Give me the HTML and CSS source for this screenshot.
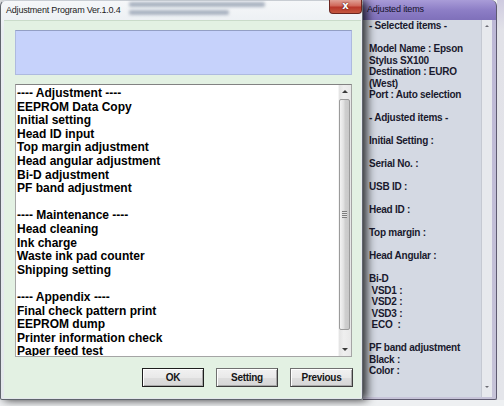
FILE: index.html
```html
<!DOCTYPE html>
<html>
<head>
<meta charset="utf-8">
<link rel="stylesheet" href="styles.css">
</head>
<body>
<div class="desktop">
  <div class="win main">
    <div class="titlebar">
      <span class="title">Adjustment Program Ver.1.0.4</span>
      <span class="ghost"><i class="g1"></i><i class="g2"></i></span>
      <span class="spacer"></span>
      <span class="close">x</span>
    </div>
    <div class="client">
      <div class="status"></div>
      <div class="listbox">
        <ul class="items">
          <li>---- Adjustment ----</li>
          <li>EEPROM Data Copy</li>
          <li>Initial setting</li>
          <li>Head ID input</li>
          <li>Top margin adjustment</li>
          <li>Head angular adjustment</li>
          <li>Bi-D adjustment</li>
          <li>PF band adjustment</li>
          <li></li>
          <li>---- Maintenance ----</li>
          <li>Head cleaning</li>
          <li>Ink charge</li>
          <li>Waste ink pad counter</li>
          <li>Shipping setting</li>
          <li></li>
          <li>---- Appendix ----</li>
          <li>Final check pattern print</li>
          <li>EEPROM dump</li>
          <li>Printer information check</li>
          <li>Paper feed test</li>
        </ul>
        <div class="vscroll">
          <div class="arrow up"></div>
          <div class="track"><div class="thumb"><span class="grip"></span></div></div>
          <div class="arrow down"></div>
        </div>
      </div>
      <div class="buttons">
        <button class="btn default">OK</button>
        <button class="btn">Setting</button>
        <button class="btn wide">Previous</button>
      </div>
    </div>
  </div>
  <div class="win side">
    <div class="side-title">Adjusted items</div>
    <div class="side-body">
      <div class="info">
        <div class="ln">- Selected items -</div>
        <div class="ln"></div>
        <div class="ln">Model Name : Epson</div>
        <div class="ln">Stylus SX100</div>
        <div class="ln">Destination : EURO</div>
        <div class="ln">(West)</div>
        <div class="ln">Port : Auto selection</div>
        <div class="ln"></div>
        <div class="ln">- Adjusted items -</div>
        <div class="ln"></div>
        <div class="ln">Initial Setting :</div>
        <div class="ln"></div>
        <div class="ln">Serial No. :</div>
        <div class="ln"></div>
        <div class="ln">USB ID :</div>
        <div class="ln"></div>
        <div class="ln">Head ID :</div>
        <div class="ln"></div>
        <div class="ln">Top margin :</div>
        <div class="ln"></div>
        <div class="ln">Head Angular :</div>
        <div class="ln"></div>
        <div class="ln">Bi-D</div>
        <div class="ln"> VSD1 :</div>
        <div class="ln"> VSD2 :</div>
        <div class="ln"> VSD3 :</div>
        <div class="ln"> ECO  :</div>
        <div class="ln"></div>
        <div class="ln">PF band adjustment</div>
        <div class="ln">Black :</div>
        <div class="ln">Color :</div>
      </div>
      <div class="side-scroll">
        <div class="sarrow up"></div>
        <div class="sarrow down"></div>
      </div>
    </div>
  </div>
  <div class="rest"></div>
</div>
</body>
</html>
```
FILE: styles.css
```css
html, body {
  margin: 0;
  padding: 0;
}
body {
  width: 504px;
  height: 406px;
  overflow: hidden;
  font-family: "Liberation Sans", Arial, sans-serif;
}
.desktop {
  width: 504px;
  height: 406px;
  display: flex;
  align-items: flex-start;
  background: #eef0f2;
  overflow: hidden;
}

/* ---------- main window ---------- */
.main {
  position: relative;
  z-index: 2;
  width: 363px;
  height: 400px;
  box-sizing: border-box;
  border: 1px solid #60656d;
  border-top-color: #c8cdd3;
  border-radius: 6px 6px 2px 2px;
  padding: 0 1px 1px 3px;
  background: linear-gradient(to bottom, #f5f7f9, #e9edf1 30px, #e4e8ec);
  box-shadow: 4px 0 10px rgba(0, 0, 0, 0.8);
  display: flex;
  flex-direction: column;
}
.titlebar {
  height: 19px;
  display: flex;
  align-items: flex-start;
  flex: none;
}
.title {
  margin-left: 2px;
  font-size: 9px;
  line-height: 19px;
  letter-spacing: -0.2px;
  color: #1b1b1b;
  white-space: nowrap;
}
.ghost {
  margin-left: 9px;
  display: flex;
  flex-direction: column;
  gap: 3px;
  margin-top: 1px;
}
.ghost i {
  display: block;
  height: 5px;
  background: #aab3c1;
  filter: blur(1.8px);
  border-radius: 2px;
}
.ghost .g1 { width: 136px; }
.ghost .g2 { width: 100px; }
.spacer { flex: 1; }
.close {
  width: 33px;
  height: 14px;
  margin-top: -1px;
  margin-right: -1px;
  box-sizing: border-box;
  border: 1px solid #6b2620;
  border-top: none;
  border-radius: 0 0 4px 4px;
  background: linear-gradient(to bottom, #e0a196 0, #d0685a 45%, #b8372b 55%, #c4573f 100%);
  color: #fff;
  font: 700 10px/12px "DejaVu Sans", sans-serif;
  text-align: center;
  text-shadow: 0 0 2px #5a1410, 0 0 1px #5a1410;
}

.client {
  height: 378px;
  box-sizing: border-box;
  background: #e3f1e3;
  border-top: 1px solid #cadbca;
  padding: 9px 9px 11px 11px;
  display: flex;
  flex-direction: column;
}
.status {
  height: 45px;
  box-sizing: border-box;
  background: #c6d2fb;
  border: 1px solid #aebadf;
  border-top-color: #939fc4;
  flex: none;
}
.listbox {
  margin-top: 9px;
  height: 273px;
  box-sizing: border-box;
  border: 1px solid #a5a5a5;
  border-top-color: #828282;
  background: #fff;
  display: flex;
  flex: none;
}
.items {
  flex: 1;
  list-style: none;
  margin: 0;
  padding: 2px 0 0 1px;
  overflow: hidden;
  font-weight: 700;
  font-size: 12px;
  line-height: 13.6px;
  color: #000;
  white-space: nowrap;
}
.items li {
  height: 13.6px;
}
.vscroll {
  width: 12px;
  display: flex;
  flex-direction: column;
  background: linear-gradient(to right, #e3e3e3, #efefef 40%, #e8e8e8);
  border-left: 1px solid #f4f4f4;
}
.arrow {
  height: 13px;
  display: flex;
  align-items: center;
  justify-content: center;
  flex: none;
}
.arrow::before {
  content: "";
  width: 0;
  height: 0;
  border-left: 3px solid transparent;
  border-right: 3px solid transparent;
}
.arrow.up::before { border-bottom: 3px solid #3a3a3a; }
.arrow.down::before { border-top: 3px solid #3a3a3a; }
.track {
  flex: 1;
  padding-top: 1px;
}
.thumb {
  height: 231px;
  margin: 0 1px 0 0;
  box-sizing: border-box;
  border: 1px solid #9b9b9b;
  border-radius: 2px;
  background: linear-gradient(to right, #f3f3f3, #dedede 45%, #cfcfcf 55%, #c8c8c8);
  display: flex;
  align-items: center;
  justify-content: center;
}
.grip {
  width: 5px;
  height: 7px;
  background: repeating-linear-gradient(to bottom, #7d7d7d 0, #7d7d7d 1px, #e4e4e4 1px, #e4e4e4 2px);
}

.buttons {
  margin-top: 11px;
  margin-right: -1px;
  display: flex;
  justify-content: flex-end;
  gap: 12px;
  flex: none;
}
.btn {
  width: 62px;
  height: 19px;
  box-sizing: border-box;
  margin: 0;
  padding: 0;
  border: 1px solid #707070;
  border-right-color: #3e3e3e;
  border-bottom-color: #3e3e3e;
  background: linear-gradient(to bottom, #f1f1f1, #e9e9e9 50%, #dedede 50%, #d6d6d6);
  box-shadow: inset 1px 1px 0 #ffffff, inset -1px -1px 0 #a8a8a8;
  font-family: "Liberation Sans", Arial, sans-serif;
  font-weight: 700;
  font-size: 10px;
  letter-spacing: -0.3px;
  line-height: 17px;
  color: #151515;
  text-align: center;
}
.btn.default {
  border-color: #1e1e1e;
}
.btn.wide {
  width: 63px;
}

/* ---------- side window ---------- */
.side {
  width: 134px;
  height: 400px;
  box-sizing: border-box;
  border-right: 1px solid #5e5a70;
  border-bottom: 1px solid #5e5a70;
  border-radius: 0 6px 2px 0;
  padding: 0 4px 2px 0;
  background: linear-gradient(to bottom, #a99cd8 0, #8d7ec6 10px, #7f70ba 20px, #bdb8d6 20px, #c6c3d8 100%);
  display: flex;
  flex-direction: column;
  flex: none;
}
.side-title {
  height: 20px;
  padding-left: 4px;
  font-size: 9px;
  line-height: 19px;
  letter-spacing: -0.15px;
  color: #14112a;
  white-space: nowrap;
  flex: none;
}
.side-body {
  flex: 1;
  display: flex;
  background: #d4d9e3;
  overflow: hidden;
}
.info {
  flex: 1;
  padding-left: 6px;
  overflow: hidden;
  font-weight: 700;
  font-size: 10px;
  line-height: 11.5px;
  letter-spacing: -0.25px;
  color: #1a1a2e;
}
.ln {
  height: 11.5px;
  white-space: pre;
}
.side-scroll {
  width: 10px;
  background: #e7e9ed;
  border-left: 1px solid #c5c9d2;
  display: flex;
  flex-direction: column;
  justify-content: space-between;
}
.sarrow {
  height: 12px;
  display: flex;
  align-items: center;
  justify-content: center;
}
.sarrow.down {
  height: 14px;
  align-items: flex-start;
  padding-top: 3px;
  box-sizing: border-box;
}
.sarrow::before {
  content: "";
  width: 0;
  height: 0;
  border-left: 2px solid transparent;
  border-right: 2px solid transparent;
}
.sarrow.up::before { border-bottom: 2px solid #6a6a72; }
.sarrow.down::before { border-top: 2px solid #6a6a72; }

.rest {
  flex: 1;
  height: 400px;
  background: linear-gradient(to bottom, #cfcbe0 0, #e2e2e8 30px, #e4e5ea 100%);
}
```
